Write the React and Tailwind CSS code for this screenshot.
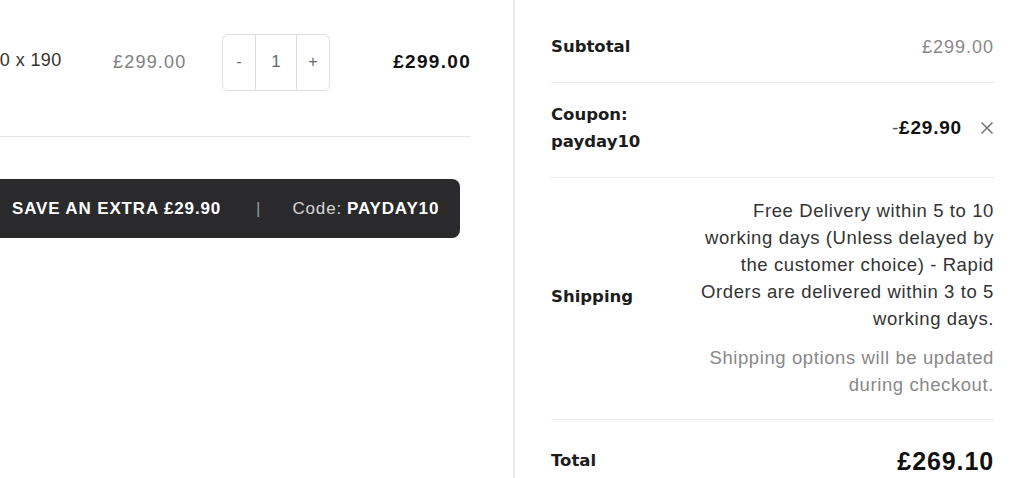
export default function App() {
    return (
        <div className="flex w-[1024px] h-[478px] overflow-hidden bg-white font-['Liberation_Sans',Arial,sans-serif] text-[#222]">
            {/* Cart column */}
            <div className="w-[515px] shrink-0 overflow-hidden border-r-2 border-[#e9e9e9] pr-[42px]">
                <div className="flex h-[137px] items-center border-b border-[#e6e6e6] pb-[12px]">
                    <div className="w-[134px] shrink-0 self-start mt-[20px] -ml-[21px] text-[18px] leading-[27px] tracking-[0.4px] text-[#333]">
                        <div className="-ml-[9px] text-[#555]">xx</div>
                        <div>150 x 190</div>
                    </div>
                    <div className="w-[109px] shrink-0 text-[18px] tracking-[1.2px] text-[#808080]">£299.00</div>
                    <div className="flex h-[57px] w-[108px] shrink-0 rounded-md border border-[#dedede] text-[#666]">
                        <div className="flex w-[33px] items-center justify-center border-r border-[#dedede] text-[15px]">-</div>
                        <div className="flex w-[41px] items-center justify-center border-r border-[#dedede] text-[17px]">1</div>
                        <div className="flex flex-1 items-center justify-center text-[16px]">+</div>
                    </div>
                    <div className="flex-1 text-right text-[19px] font-bold tracking-[1.3px] text-[#111]">£299.00</div>
                </div>

                <div className="mt-[42px] -ml-[10px] flex h-[59px] w-[470px] items-center rounded-lg bg-[#2a2a2c] pl-[22px] text-[17px] tracking-[0.85px]">
                    <span className="font-bold text-white">SAVE AN EXTRA £29.90</span>
                    <span className="ml-[35px] text-[#9a9a9a]">|</span>
                    <span className="ml-[31px] text-[#d6d6d6]">Code:</span>
                    <span className="ml-[5px] font-bold text-white">PAYDAY10</span>
                </div>
            </div>

            {/* Totals column */}
            <div className="flex-1 pl-[36px] pr-[30px]">
                <div className="flex items-center justify-between border-b border-[#ebebeb] pt-[33px] pb-[21px] leading-[28px]">
                    <span className="font-['DejaVu_Sans',sans-serif] text-[16.5px] font-bold text-[#1c1c1c]">Subtotal</span>
                    <span className="text-[18px] tracking-[1px] text-[#888]">£299.00</span>
                </div>

                <div className="flex items-center justify-between border-b border-[#ebebeb] pt-[18px] pb-[22px]">
                    <span className="font-['DejaVu_Sans',sans-serif] text-[16.5px] font-bold leading-[27px] text-[#1c1c1c]">
                        Coupon:
                        <br />
                        payday10
                    </span>
                    <span className="flex items-center text-[19px] tracking-[0.8px]">
                        <span className="text-[#555]">-</span>
                        <span className="font-bold text-[#111]">£29.90</span>
                        <svg className="ml-[18px] h-[14px] w-[14px] text-[#666]" viewBox="0 0 14 14" fill="none" stroke="currentColor" strokeWidth="1.3">
                            <path d="M1.5 1.5l11 11M12.5 1.5l-11 11" />
                        </svg>
                    </span>
                </div>

                <div className="flex items-center justify-between border-b border-[#ebebeb] pt-[19px] pb-[21px]">
                    <span className="font-['DejaVu_Sans',sans-serif] text-[16.5px] font-bold text-[#1c1c1c]">Shipping</span>
                    <div className="text-right text-[18.5px] leading-[27px] tracking-[0.6px]">
                        <p className="text-[#333]">
                            Free Delivery within 5 to 10
                            <br />
                            working days (Unless delayed by
                            <br />
                            the customer choice) - Rapid
                            <br />
                            Orders are delivered within 3 to 5
                            <br />
                            working days.
                        </p>
                        <p className="mt-[12px] text-[#888]">
                            Shipping options will be updated
                            <br />
                            during checkout.
                        </p>
                    </div>
                </div>

                <div className="flex items-center justify-between pt-[23px]">
                    <span className="font-['DejaVu_Sans',sans-serif] text-[16.5px] font-bold text-[#1c1c1c]">Total</span>
                    <span className="text-[25px] font-bold tracking-[0.9px] text-[#111]">£269.10</span>
                </div>
            </div>
        </div>
    );
}
